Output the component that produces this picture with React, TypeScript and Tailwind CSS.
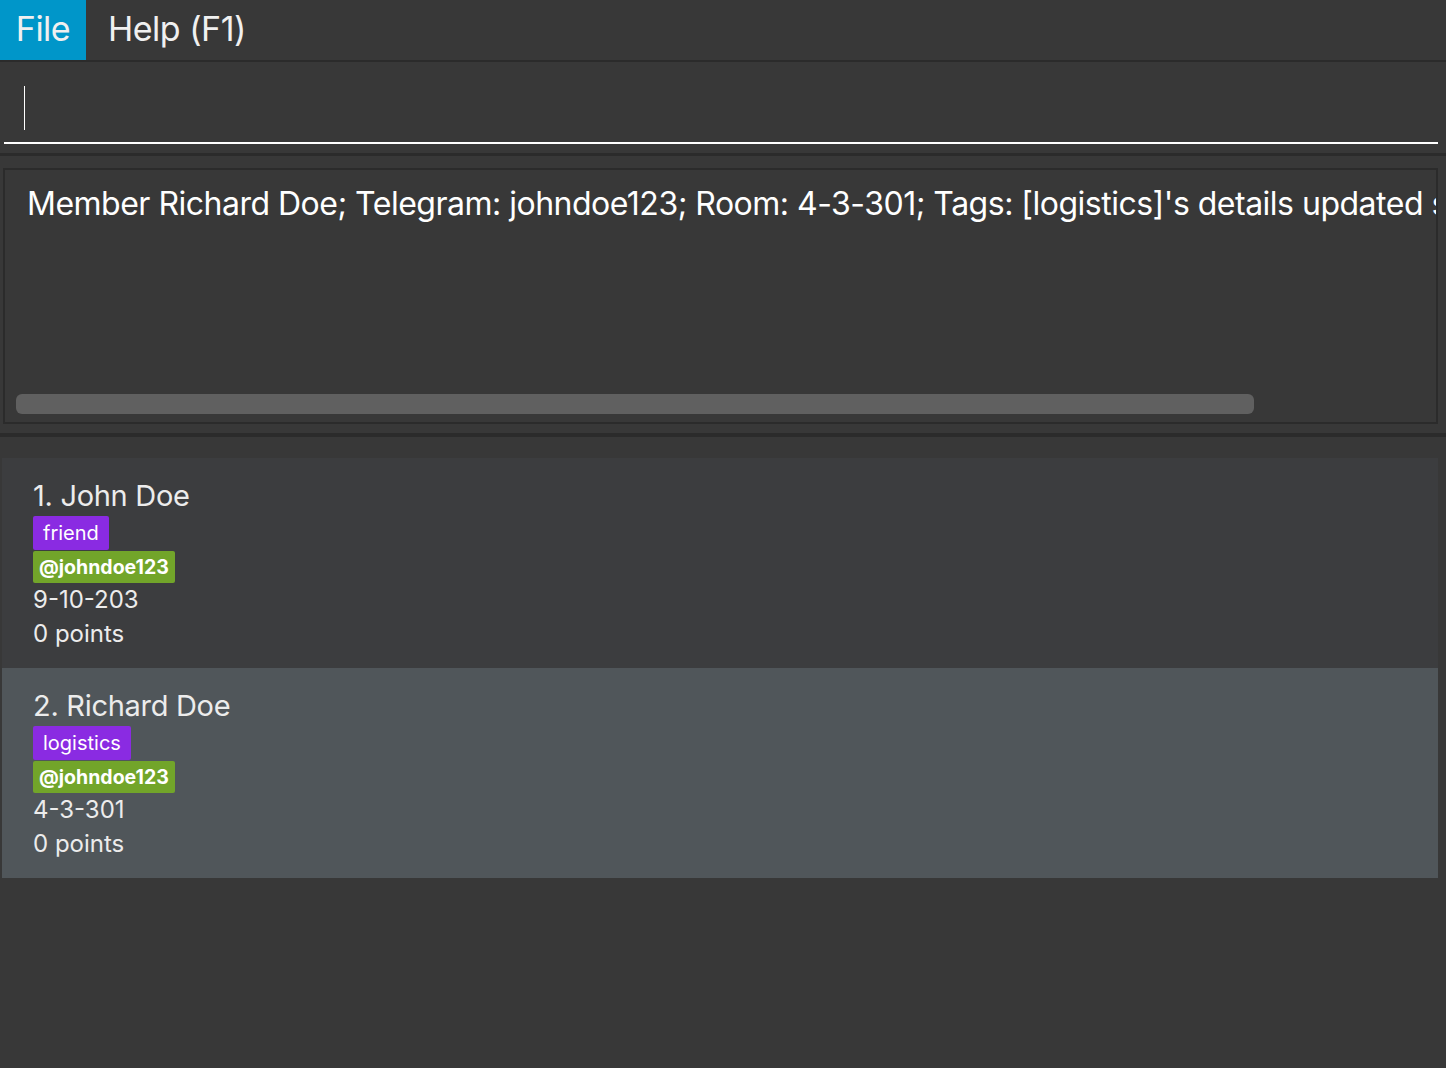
import React from 'react';

interface Member {
  name: string;
  tags: string[];
  telegram: string;
  room: string;
  points: number;
}

const members: Member[] = [
  { name: 'John Doe', tags: ['friend'], telegram: '@johndoe123', room: '9-10-203', points: 0 },
  { name: 'Richard Doe', tags: ['logistics'], telegram: '@johndoe123', room: '4-3-301', points: 0 },
];

const MemberCard: React.FC<{ index: number; member: Member; selected?: boolean }> = ({ index, member, selected }) => (
  <div className={`h-[210px] pl-[31px] pt-[18px] flex flex-col items-start ${selected ? 'bg-[#50565a]' : 'bg-[#3c3d3f]'}`}>
    <div className="text-[29px] leading-[40px] text-[#ececec] tracking-[-0.3px]">
      {index}. {member.name}
    </div>
    <div className="flex gap-1">
      {member.tags.map((t) => (
        <span key={t} className="bg-[#8a2be2] text-white text-[20px] leading-[34px] px-[10px] rounded-[2px]">
          {t}
        </span>
      ))}
    </div>
    <span className="mt-px bg-[#72a52a] text-white font-bold text-[19.5px] leading-[32px] px-[6px] rounded-[2px]">
      {member.telegram}
    </span>
    <div className="text-[24px] leading-[34px] text-[#ececec]">{member.room}</div>
    <div className="text-[24px] leading-[34px] text-[#ececec]">{member.points} points</div>
  </div>
);

export default function App() {
  return (
    <div className="w-[1446px] h-[1068px] bg-[#383838] flex flex-col overflow-hidden font-['Inter',sans-serif]">
      {/* menu bar */}
      <div className="h-[60px] flex items-stretch text-[34px] text-[#f0f0f0] tracking-[-0.5px]">
        <div className="w-[86px] bg-[#0096c9] flex items-center justify-center pb-[4px]">File</div>
        <div className="px-[22px] flex items-center pb-[4px]">Help (F1)</div>
      </div>
      <div className="h-[2px] bg-[#2b2b2b]" />

      {/* command box */}
      <div className="h-[91px] pl-[4px] pr-[8px] pt-[24px]">
        <div className="h-[58px] border-b-2 border-white flex items-start pl-[20px]">
          <div className="w-px h-[44px] bg-white" />
        </div>
      </div>
      <div className="h-[3px] bg-[#2b2b2b]" />

      {/* result display */}
      <div className="h-[277px] pt-[12px] pl-[3px] pr-[8px]">
        <div className="h-[256px] border-2 border-[#2b2b2b] flex flex-col overflow-hidden">
          <div className="pl-[22px] pt-[14px] text-[32px] leading-[40px] text-white whitespace-nowrap tracking-[-0.5px] flex-1">
            Member Richard Doe; Telegram: johndoe123; Room: 4-3-301; Tags: [logistics]'s details updated successfully
          </div>
          <div className="pl-[11px] pb-[8px]">
            <div className="w-[1238px] h-[20px] rounded-[6px] bg-[#606060]" />
          </div>
        </div>
      </div>
      <div className="h-[4px] bg-[#2b2b2b]" />

      {/* list */}
      <div className="pt-[21px] pl-[2px] pr-[8px]">
        {members.map((m, i) => (
          <MemberCard key={i} index={i + 1} member={m} selected={i === 1} />
        ))}
      </div>
    </div>
  );
}
